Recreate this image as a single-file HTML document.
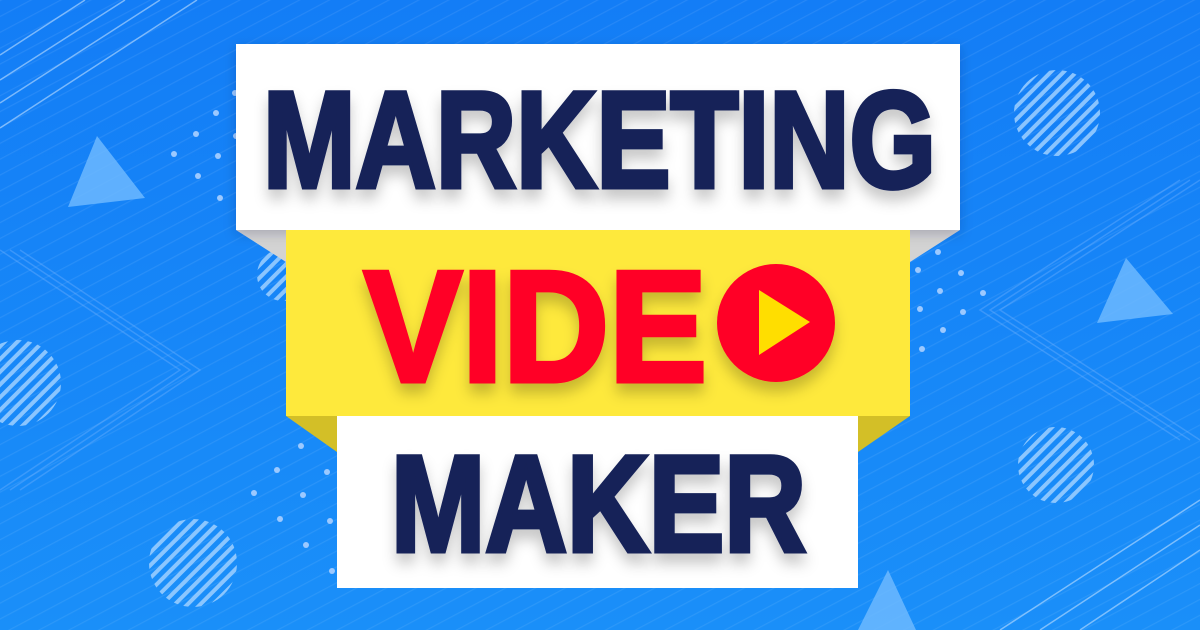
<!DOCTYPE html>
<html><head><style>
html,body{margin:0;padding:0;width:1200px;height:630px;overflow:hidden;background:#1784f5}
svg{display:block}
text{font-family:"Liberation Sans",sans-serif;font-weight:bold;stroke-linejoin:miter}
</style></head><body>
<svg width="1200" height="630" viewBox="0 0 1200 630" xmlns="http://www.w3.org/2000/svg">
<defs>
<linearGradient id="bg" x1="0" y1="0" x2="0" y2="1">
<stop offset="0" stop-color="#137df6"/><stop offset="1" stop-color="#1a8ff9"/></linearGradient>
<pattern id="stripe" width="9" height="9" patternUnits="userSpaceOnUse" patternTransform="rotate(-45)">
<rect width="9" height="4" fill="#9fd0ff" opacity="0.85"/></pattern>
<pattern id="lines" width="14" height="14" patternUnits="userSpaceOnUse" patternTransform="rotate(-28)">
<rect width="14" height="1.2" fill="#ffffff" opacity="0.08"/></pattern>
<filter id="sh" x="-10%" y="-10%" width="120%" height="140%"><feDropShadow dx="0" dy="10" stdDeviation="7" flood-color="#000" flood-opacity="0.22"/></filter>
<filter id="bsh" x="-10%" y="-10%" width="120%" height="130%"><feDropShadow dx="0" dy="4" stdDeviation="6" flood-color="#003" flood-opacity="0.2"/></filter>
</defs>
<rect width="1200" height="630" fill="url(#bg)"/>
<rect width="1200" height="630" fill="url(#lines)"/>
<g stroke="#7fb8ff" stroke-opacity="0.35" fill="none" stroke-width="1.5">
<polyline points="0,250 180,370 0,490"/><polyline points="10,250 190,370 10,490"/><polyline points="20,250 200,370 20,490"/>
<polyline points="1200,180 1000,310 1200,440"/><polyline points="1190,180 990,310 1190,440"/><polyline points="1180,180 980,310 1180,440"/>
</g>
<g stroke="#bfe0ff" stroke-opacity="0.6" stroke-width="1.5">
<line x1="0" y1="55" x2="85" y2="0"/><line x1="0" y1="80" x2="125" y2="0"/><line x1="0" y1="103" x2="160" y2="0"/><line x1="0" y1="128" x2="197" y2="0"/>
<line x1="1000" y1="630" x2="1200" y2="500"/><line x1="1040" y1="630" x2="1200" y2="525"/><line x1="1080" y1="630" x2="1200" y2="550"/>
</g>
<g fill="url(#stripe)">
<circle cx="1057" cy="113" r="43"/><circle cx="1056" cy="465" r="38"/><circle cx="18" cy="383" r="43"/><circle cx="193" cy="563" r="44"/><circle cx="283" cy="275" r="26"/>
</g>
<g fill="#72bbff" opacity="0.8">
<polygon points="97,136 68,207 145,198"/><polygon points="1126,258 1097,323 1173,314"/><polygon points="888,570 858,630 916,630"/>
</g>
<g fill="#9cc9ff">
<circle cx="235" cy="93" r="3"/><circle cx="216" cy="113" r="3"/><circle cx="196" cy="134" r="3"/><circle cx="174" cy="154" r="3"/><circle cx="218" cy="156" r="3"/><circle cx="198" cy="176" r="3"/><circle cx="220" cy="198" r="3"/><circle cx="236" cy="136" r="3"/>
<circle cx="938" cy="252" r="3"/><circle cx="918" cy="270" r="3"/><circle cx="961" cy="273" r="3"/><circle cx="940" cy="291" r="3"/><circle cx="983" cy="293" r="3"/><circle cx="920" cy="309" r="3"/><circle cx="963" cy="312" r="3"/><circle cx="943" cy="330" r="3"/><circle cx="922" cy="349" r="3"/>
<circle cx="301" cy="446" r="3"/><circle cx="277" cy="470" r="3"/><circle cx="327" cy="472" r="3"/><circle cx="254" cy="493" r="3"/><circle cx="303" cy="495" r="3"/><circle cx="280" cy="519" r="3"/><circle cx="330" cy="521" r="3"/><circle cx="306" cy="545" r="3"/><circle cx="332" cy="571" r="3"/>
</g>
<polygon points="236,230 286,230 286,262" fill="#d3d3d3"/>
<polygon points="960,230 910,230 910,262" fill="#d3d3d3"/>
<polygon points="286,416 337,416 337,452" fill="#d3bf27"/>
<polygon points="910,416 858,416 858,452" fill="#d3bf27"/>
<rect x="236" y="44" width="724" height="186" fill="#fff" filter="url(#bsh)"/>
<rect x="286" y="230" width="624" height="186" fill="#fee93c"/>
<rect x="337" y="416" width="521" height="172" fill="#fff"/>
<g filter="url(#sh)">
<text x="263" y="187" font-size="137" fill="#152258" stroke="#152258" stroke-width="5" textLength="673" lengthAdjust="spacingAndGlyphs">MARKETING</text>
<text x="364" y="381" font-size="158" fill="#ff0026" stroke="#ff0026" stroke-width="5" textLength="343" lengthAdjust="spacingAndGlyphs">VIDE</text>
<circle cx="776" cy="323" r="59" fill="#ff0026"/>
<polygon points="759,290 759,355 810,322" fill="#ffde00"/>
<text x="391" y="551" font-size="137" fill="#152258" stroke="#152258" stroke-width="5" textLength="415" lengthAdjust="spacingAndGlyphs">MAKER</text>
</g>
</svg>
</body></html>
